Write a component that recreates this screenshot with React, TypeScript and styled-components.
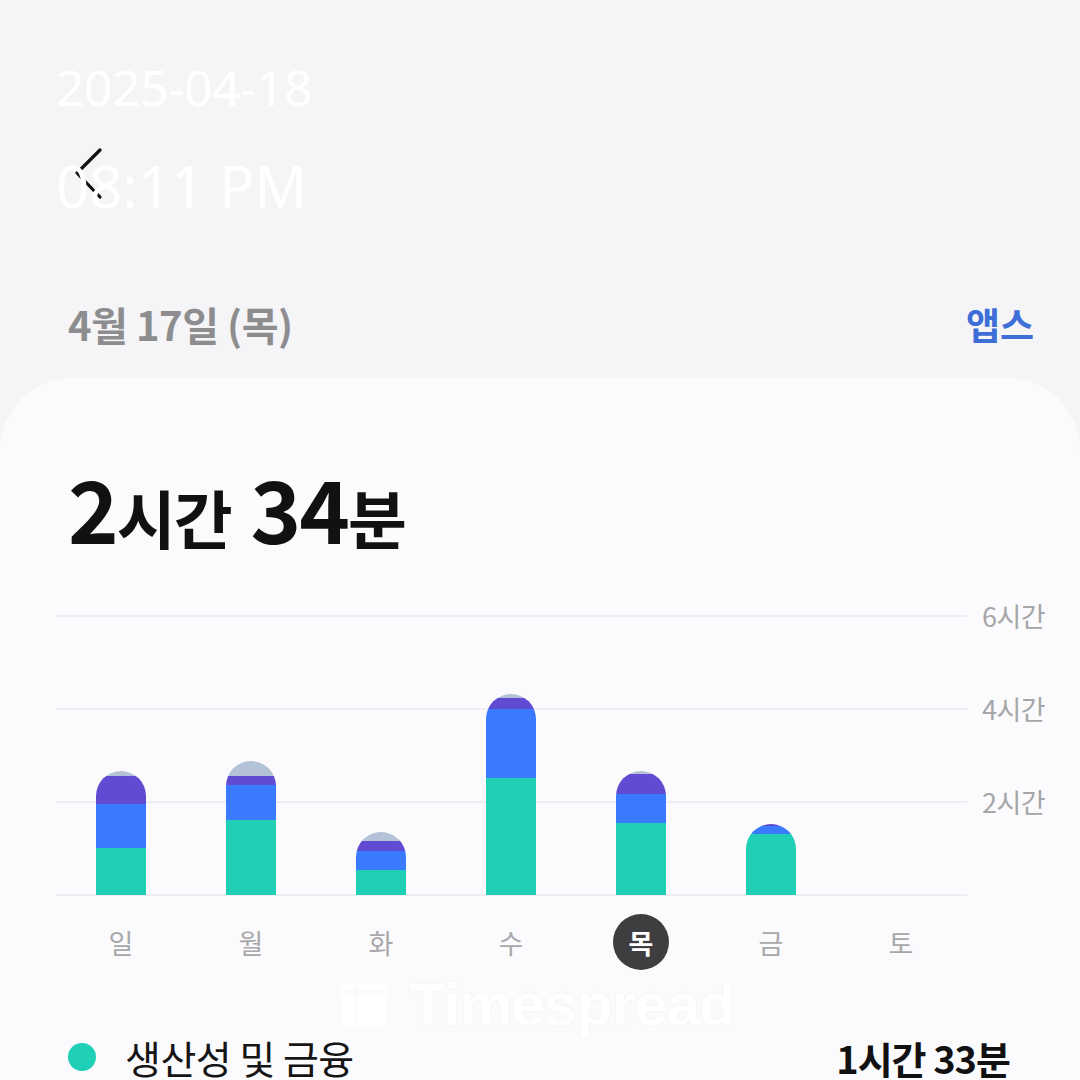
import React from 'react';
import styled, { createGlobalStyle } from 'styled-components';

const GlobalStyle = createGlobalStyle`
  html, body {
    margin: 0;
    padding: 0;
    background: #f5f5f7;
  }
  body {
    font-family: "Noto Sans CJK KR", "Noto Sans", sans-serif;
  }
`;

const COLORS = {
  green: '#1fcfb6',
  blue: '#3a7afe',
  purple: '#604bd2',
  gray: '#b3c2d6',
};

interface IDay {
  label: string;
  // px heights of segments, bottom to top
  green: number;
  blue: number;
  purple: number;
  gray: number;
}

const days: IDay[] = [
  { label: '일', green: 47, blue: 44, purple: 28, gray: 5 },
  { label: '월', green: 75, blue: 35, purple: 9, gray: 15 },
  { label: '화', green: 25, blue: 19, purple: 10, gray: 9 },
  { label: '수', green: 117, blue: 69, purple: 11, gray: 4 },
  { label: '목', green: 72, blue: 29, purple: 20, gray: 3 },
  { label: '금', green: 61, blue: 8, purple: 2, gray: 0 },
  { label: '토', green: 0, blue: 0, purple: 0, gray: 0 },
];

const Page = styled.div`
  position: relative;
  width: 1080px;
  height: 1080px;
  overflow: hidden;
  background: #f5f5f7;
`;

const Stamp = styled.div`
  position: absolute;
  left: 56px;
  top: 52px;
  color: #ffffff;
  font-family: "Noto Sans", sans-serif;
  font-weight: 400;
  pointer-events: none;
  z-index: 5;
`;

const StampDate = styled.div`
  font-size: 50px;
  line-height: 70px;
  letter-spacing: -0.5px;
`;

const StampTime = styled.div`
  font-size: 58px;
  line-height: 80px;
  margin-top: 24px;
`;

const TopBar = styled.div`
  height: 270px;
  display: flex;
  align-items: flex-start;
  padding: 146px 0 0 72px;
  box-sizing: border-box;
`;

const BackButton = styled.button`
  border: 0;
  background: transparent;
  padding: 0;
  width: 36px;
  height: 56px;
  display: flex;
  align-items: center;
  justify-content: center;
`;

const DateRow = styled.div`
  display: flex;
  justify-content: space-between;
  align-items: center;
  padding: 0 46px 0 68px;
  height: 108px;
`;

const DateLabel = styled.div`
  color: #8d8d8f;
  font-size: 40px;
  font-weight: 700;
  letter-spacing: -0.5px;
`;

const AppsLink = styled.div`
  color: #3d6fd7;
  font-size: 37px;
  font-weight: 700;
`;

const Card = styled.div`
  position: relative;
  background: #fbfbfd;
  border-radius: 72px 72px 0 0;
  padding: 66px 0 0 56px;
  min-height: 800px;
`;

const Total = styled.div`
  display: flex;
  align-items: baseline;
  color: #111;
  font-weight: 700;
  padding-left: 12px;
  height: 96px;
`;

const TotalNum = styled.span`
  font-size: 86px;
  letter-spacing: -2px;
`;

const TotalUnit = styled.span<{ $gap?: boolean }>`
  font-size: 64px;
  margin-right: ${({ $gap }) => ($gap ? '20px' : '0')};
  letter-spacing: -2px;
`;

const ChartRow = styled.div`
  display: flex;
  margin-top: 58px;
`;

const Plot = styled.div`
  width: 911px;
  height: 298px;
  display: grid;
  grid-template-columns: repeat(7, 130px);
  align-items: end;
  background:
    linear-gradient(#eeeef2, #eeeef2) 0 17px / 100% 2px no-repeat,
    linear-gradient(#eeeef2, #eeeef2) 0 110px / 100% 2px no-repeat,
    linear-gradient(#eeeef2, #eeeef2) 0 203px / 100% 2px no-repeat,
    linear-gradient(#eeeef2, #eeeef2) 0 296px / 100% 2px no-repeat;
`;

const Bar = styled.div`
  justify-self: center;
  width: 50px;
  margin-bottom: 1px;
  display: flex;
  flex-direction: column-reverse;
  border-radius: 25px 25px 0 0;
  overflow: hidden;
`;

const Segment = styled.div<{ $color: string }>`
  background: ${({ $color }) => $color};
  flex-shrink: 0;
`;

const AxisLabels = styled.div`
  display: flex;
  flex-direction: column;
  gap: 57px;
  padding: 0 0 0 15px;
`;

const AxisLabel = styled.div`
  height: 36px;
  line-height: 36px;
  color: #a6a6a8;
  font-size: 27px;
  letter-spacing: -0.5px;
`;

const DayRow = styled.div`
  display: grid;
  grid-template-columns: repeat(7, 130px);
  margin-top: 18px;
  height: 56px;
`;

const DayLabel = styled.div<{ $active?: boolean }>`
  justify-self: center;
  width: 56px;
  height: 56px;
  border-radius: 50%;
  display: flex;
  align-items: center;
  justify-content: center;
  font-size: 27px;
  font-weight: ${({ $active }) => ($active ? 700 : 400)};
  color: ${({ $active }) => ($active ? '#ffffff' : '#a8a8aa')};
  background: ${({ $active }) => ($active ? '#3e3e40' : 'transparent')};
`;

const Watermark = styled.div`
  position: absolute;
  left: 341px;
  top: 592px;
  display: flex;
  align-items: center;
  gap: 22px;
  color: #ffffff;
  font-family: "Liberation Sans", Arial, sans-serif;
  font-weight: 700;
  font-size: 60px;
  letter-spacing: -1px;
  text-shadow: 0 0 3px rgba(0, 0, 0, 0.05);
  pointer-events: none;
`;

const LegendRow = styled.div`
  display: flex;
  align-items: center;
  justify-content: space-between;
  padding: 0 70px 0 12px;
  margin-top: 57px;
  height: 60px;
`;

const LegendName = styled.div`
  display: flex;
  align-items: center;
  gap: 29px;
  font-size: 39px;
  color: #151515;
  letter-spacing: -0.5px;
`;

const Dot = styled.span<{ $color: string }>`
  width: 28px;
  height: 28px;
  border-radius: 50%;
  background: ${({ $color }) => $color};
`;

const LegendValue = styled.div`
  font-size: 38px;
  font-weight: 700;
  color: #111;
  letter-spacing: -1px;
`;

function BackIcon() {
  return (
    <svg width="36" height="56" viewBox="0 0 36 56" fill="none">
      <path d="M28 4 L5 27 L28 51" stroke="#111" strokeWidth="3.2" strokeLinecap="round" strokeLinejoin="round" />
    </svg>
  );
}

function WatermarkIcon() {
  return (
    <svg width="46" height="44" viewBox="0 0 46 44" fill="#ffffff">
      <rect x="0" y="0" width="13" height="7" />
      <rect x="0" y="12" width="13" height="32" />
      <rect x="16" y="0" width="30" height="7" />
      <rect x="16" y="12" width="30" height="32" />
    </svg>
  );
}

export default function App() {
  return (
    <Page>
      <GlobalStyle />
      <Stamp>
        <StampDate>2025-04-18</StampDate>
        <StampTime>08:11 PM</StampTime>
      </Stamp>

      <TopBar>
        <BackButton aria-label="뒤로">
          <BackIcon />
        </BackButton>
      </TopBar>

      <DateRow>
        <DateLabel>4월 17일 (목)</DateLabel>
        <AppsLink>앱스</AppsLink>
      </DateRow>

      <Card>
        <Total>
          <TotalNum>2</TotalNum>
          <TotalUnit $gap>시간</TotalUnit>
          <TotalNum>34</TotalNum>
          <TotalUnit>분</TotalUnit>
        </Total>

        <ChartRow>
          <Plot>
            {days.map((d) => (
              <Bar key={d.label}>
                <Segment $color={COLORS.green} style={{ height: d.green }} />
                <Segment $color={COLORS.blue} style={{ height: d.blue }} />
                <Segment $color={COLORS.purple} style={{ height: d.purple }} />
                <Segment $color={COLORS.gray} style={{ height: d.gray }} />
              </Bar>
            ))}
          </Plot>
          <AxisLabels>
            <AxisLabel>6시간</AxisLabel>
            <AxisLabel>4시간</AxisLabel>
            <AxisLabel>2시간</AxisLabel>
          </AxisLabels>
        </ChartRow>

        <DayRow>
          {days.map((d) => (
            <DayLabel key={d.label} $active={d.label === '목'}>
              {d.label}
            </DayLabel>
          ))}
        </DayRow>

        <Watermark>
          <WatermarkIcon />
          <span>Timespread</span>
        </Watermark>

        <LegendRow>
          <LegendName>
            <Dot $color={COLORS.green} />
            생산성 및 금융
          </LegendName>
          <LegendValue>1시간 33분</LegendValue>
        </LegendRow>
      </Card>
    </Page>
  );
}
